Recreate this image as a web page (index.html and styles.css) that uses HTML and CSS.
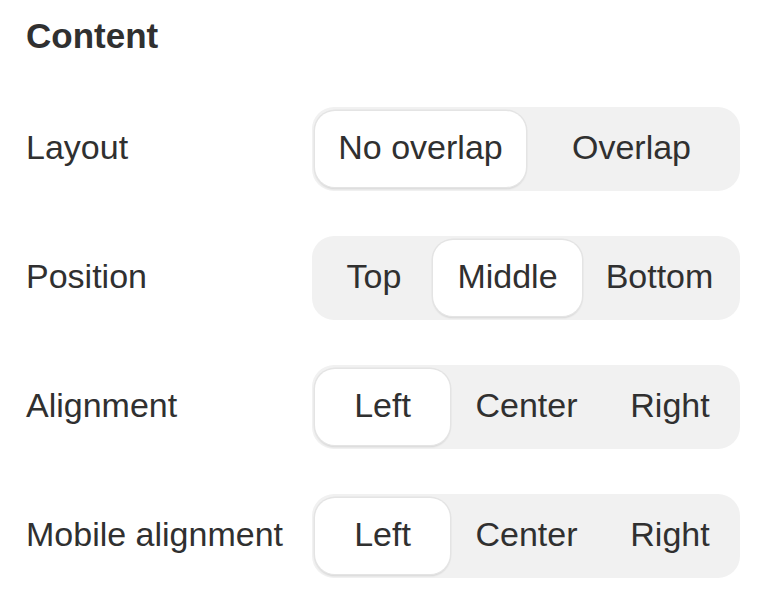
FILE: index.html
```html
<!DOCTYPE html>
<html>
<head>
<meta charset="utf-8">
<link rel="stylesheet" href="styles.css">
</head>
<body>
<div class="panel">
  <h2 class="title">Content</h2>
  <div class="rows">
    <div class="row">
      <div class="label">Layout</div>
      <div class="seg seg-2">
        <div class="opt on">No overlap</div>
        <div class="opt">Overlap</div>
      </div>
    </div>
    <div class="row">
      <div class="label">Position</div>
      <div class="seg seg-pos">
        <div class="opt">Top</div>
        <div class="opt on">Middle</div>
        <div class="opt">Bottom</div>
      </div>
    </div>
    <div class="row">
      <div class="label">Alignment</div>
      <div class="seg seg-3">
        <div class="opt on">Left</div>
        <div class="opt">Center</div>
        <div class="opt">Right</div>
      </div>
    </div>
    <div class="row">
      <div class="label">Mobile alignment</div>
      <div class="seg seg-3">
        <div class="opt on">Left</div>
        <div class="opt">Center</div>
        <div class="opt">Right</div>
      </div>
    </div>
  </div>
</div>
</body>
</html>
```
FILE: styles.css
```css
html, body {
  margin: 0;
  padding: 0;
  background: #ffffff;
}
body {
  font-family: "Liberation Sans", Arial, sans-serif;
  color: #303030;
}
.panel {
  padding: 16px 0 0 26px;
}
.title {
  margin: 0;
  font-size: 35px;
  line-height: 40px;
  font-weight: 700;
  color: #303030;
}
.rows {
  margin-top: 51px;
  display: flex;
  flex-direction: column;
  gap: 45px;
}
.row {
  display: grid;
  grid-template-columns: 286px 428px;
  align-items: center;
}
.label {
  font-size: 34px;
  line-height: 40px;
  padding-bottom: 4px;
  color: #303030;
  white-space: nowrap;
}
.seg {
  height: 84px;
  box-sizing: border-box;
  padding: 3px;
  background: #f1f1f1;
  border-radius: 22px;
  display: grid;
}
.seg-2 { grid-template-columns: 1fr 1fr; }
.seg-3 { grid-template-columns: 135fr 153fr 134fr; }
.seg-pos { grid-template-columns: 118fr 149fr 155fr; }
.opt {
  display: flex;
  align-items: center;
  justify-content: center;
  font-size: 34px;
  line-height: 40px;
  padding-bottom: 4px;
  color: #303030;
  border-radius: 20px;
  white-space: nowrap;
}
.opt.on {
  background: #ffffff;
  box-shadow: 0 0 0 1.5px #e4e4e4, 0 2px 2px rgba(0, 0, 0, 0.14);
  margin: 1px 0 1px 0;
}
```
